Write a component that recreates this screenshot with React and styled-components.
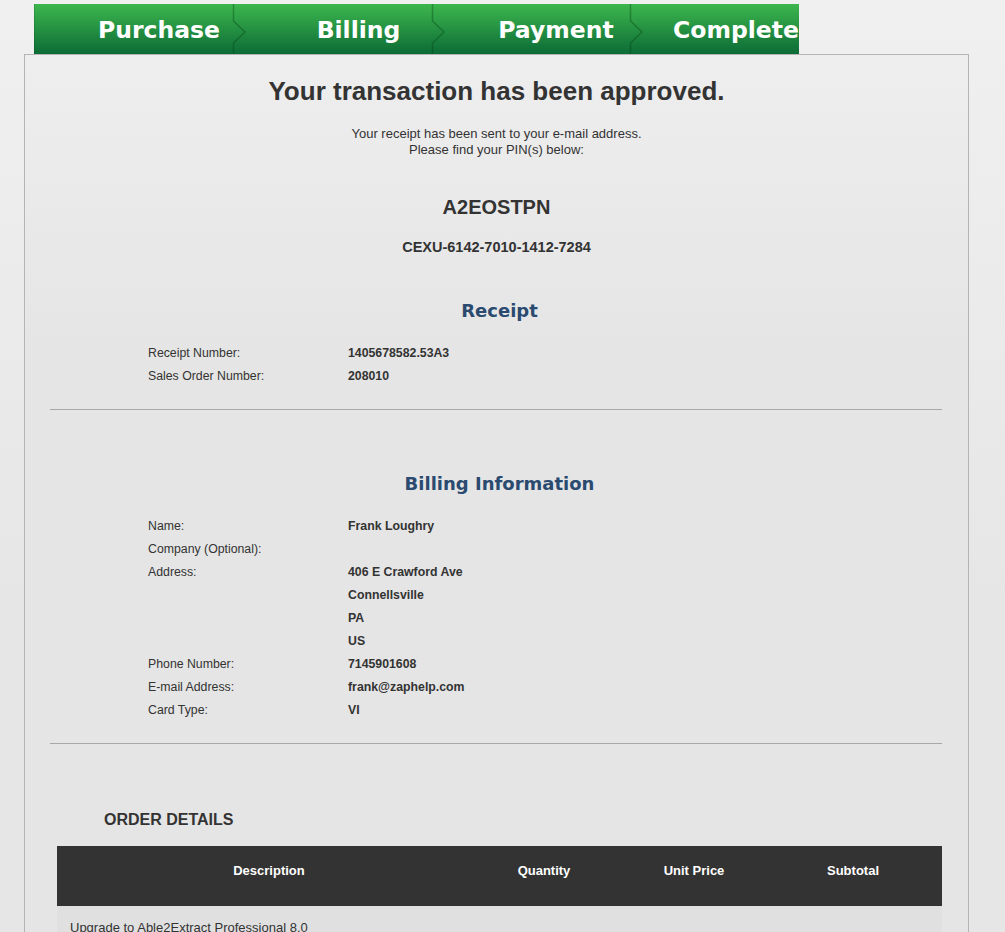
import React from 'react';
import styled, { createGlobalStyle } from 'styled-components';

const Global = createGlobalStyle`
  html, body {
    margin: 0;
    padding: 0;
  }
  body {
    min-height: 100vh;
    background: linear-gradient(#f0f0f0, #e6e6e6 600px, #e6e6e6);
    font-family: "Liberation Sans", Arial, sans-serif;
    color: #333;
  }
`;

const Page = styled.div`
  padding: 4px 0 0 24px;
`;

const Steps = styled.div`
  display: flex;
  width: 765px;
  height: 50px;
  margin-left: 10px;
  overflow: hidden;
  background: linear-gradient(#3db64d, #0c6b36);
  border-left: 1px solid rgba(0, 0, 0, 0.12);
  box-sizing: border-box;
`;

const Step = styled.div`
  position: relative;
  flex: 0 0 ${(p) => p.$w}px;
  box-sizing: border-box;
  padding-left: ${(p) => p.$pad}px;
  text-align: ${(p) => p.$align || 'center'};
  font-family: "DejaVu Sans", Verdana, sans-serif;
  font-weight: bold;
  font-size: 23.5px;
  line-height: 53px;
  color: #fff;
  white-space: nowrap;
`;

const Divider = styled.svg`
  position: absolute;
  left: -1px;
  top: 0;
  width: 16px;
  height: 50px;
`;

const Panel = styled.div`
  width: 945px;
  box-sizing: border-box;
  border: 1px solid #b4b4b4;
  border-bottom: none;
  background: linear-gradient(#eeeeee, #e5e5e5 300px, #e5e5e5);
  min-height: 878px;
  padding-bottom: 40px;
`;

const Title = styled.h1`
  margin: 19px 0 0;
  text-align: center;
  font-size: 26px;
  line-height: 34px;
  font-weight: bold;
  color: #333;
`;

const Note = styled.p`
  margin: 18px 0 0;
  text-align: center;
  font-size: 13px;
  line-height: 16px;
  color: #333;
`;

const Pin = styled.div`
  margin-top: ${(p) => p.$top}px;
  text-align: center;
  font-weight: bold;
  font-size: ${(p) => p.$size}px;
  line-height: ${(p) => p.$lh}px;
  color: #333;
`;

const SectionTitle = styled.h2`
  margin: ${(p) => p.$top}px 0 0;
  padding-left: 6px;
  text-align: center;
  font-family: "DejaVu Sans", Verdana, sans-serif;
  font-size: 18px;
  line-height: 24px;
  font-weight: bold;
  color: #2b4a70;
`;

const InfoList = styled.div`
  margin-top: 19px;
  padding-left: 123px;
`;

const InfoRow = styled.div`
  display: grid;
  grid-template-columns: 200px 1fr;
  font-size: 12.3px;
  line-height: 23px;
  color: #333;
`;

const Value = styled.span`
  font-weight: bold;
`;

const Rule = styled.hr`
  margin: 21px 26px 0 25px;
  border: none;
  border-top: 1px solid #a8a8a8;
  height: 0;
`;

const OrderTitle = styled.h3`
  margin: 66px 0 0 79px;
  font-size: 16px;
  line-height: 20px;
  font-weight: bold;
  color: #333;
`;

const Table = styled.div`
  margin: 16px 26px 0 32px;
`;

const HeadRow = styled.div`
  display: grid;
  grid-template-columns: 424px 126px 174px 144px 1fr;
  height: 60px;
  box-sizing: border-box;
  padding-top: 17px;
  line-height: 16px;
  background: #333;
  color: #fff;
  font-size: 13px;
  font-weight: bold;
`;

const HeadCell = styled.div`
  text-align: center;
`;

const BodyRow = styled.div`
  background: #e0e0e0;
  padding: 14px 13px 10px;
  font-size: 13px;
  line-height: 16px;
  color: #333;
`;

const steps = [
  { label: 'Purchase', w: 198, pad: 50 },
  { label: 'Billing', w: 199, pad: 52 },
  { label: 'Payment', w: 198, pad: 50 },
  { label: 'Complete', w: 170, pad: 43, align: 'left' },
];

const receipt = [
  ['Receipt Number:', '1405678582.53A3'],
  ['Sales Order Number:', '208010'],
];

const billing = [
  ['Name:', 'Frank Loughry'],
  ['Company (Optional):', ''],
  ['Address:', '406 E Crawford Ave'],
  ['', 'Connellsville'],
  ['', 'PA'],
  ['', 'US'],
  ['Phone Number:', '7145901608'],
  ['E-mail Address:', 'frank@zaphelp.com'],
  ['Card Type:', 'VI'],
];

const Rows = ({ items }) => (
  <InfoList>
    {items.map(([label, value], i) => (
      <InfoRow key={i}>
        <span>{label}</span>
        <Value>{value}</Value>
      </InfoRow>
    ))}
  </InfoList>
);

export default function App() {
  return (
    <Page>
      <Global />
      <Steps>
        {steps.map((s, i) => (
          <Step key={s.label} $w={s.w} $pad={s.pad} $align={s.align}>
            {i > 0 && (
              <Divider viewBox="0 0 16 50">
                <path d="M1.5 0 V17 L13 28 L1.5 39 V50" fill="none" stroke="rgba(0,60,20,0.35)" strokeWidth="1.5" />
              </Divider>
            )}
            {s.label}
          </Step>
        ))}
      </Steps>
      <Panel>
        <Title>Your transaction has been approved.</Title>
        <Note>
          Your receipt has been sent to your e-mail address.
          <br />
          Please find your PIN(s) below:
        </Note>
        <Pin $top={37} $size={20} $lh={24}>A2EOSTPN</Pin>
        <Pin $top={19} $size={14.5} $lh={18}>CEXU-6142-7010-1412-7284</Pin>

        <SectionTitle $top={43}>Receipt</SectionTitle>
        <Rows items={receipt} />
        <Rule />

        <SectionTitle $top={62}>Billing Information</SectionTitle>
        <Rows items={billing} />
        <Rule />

        <OrderTitle>ORDER DETAILS</OrderTitle>
        <Table>
          <HeadRow>
            <HeadCell>Description</HeadCell>
            <HeadCell>Quantity</HeadCell>
            <HeadCell>Unit Price</HeadCell>
            <HeadCell>Subtotal</HeadCell>
            <span />
          </HeadRow>
          <BodyRow>Upgrade to Able2Extract Professional 8.0</BodyRow>
        </Table>
      </Panel>
    </Page>
  );
}
